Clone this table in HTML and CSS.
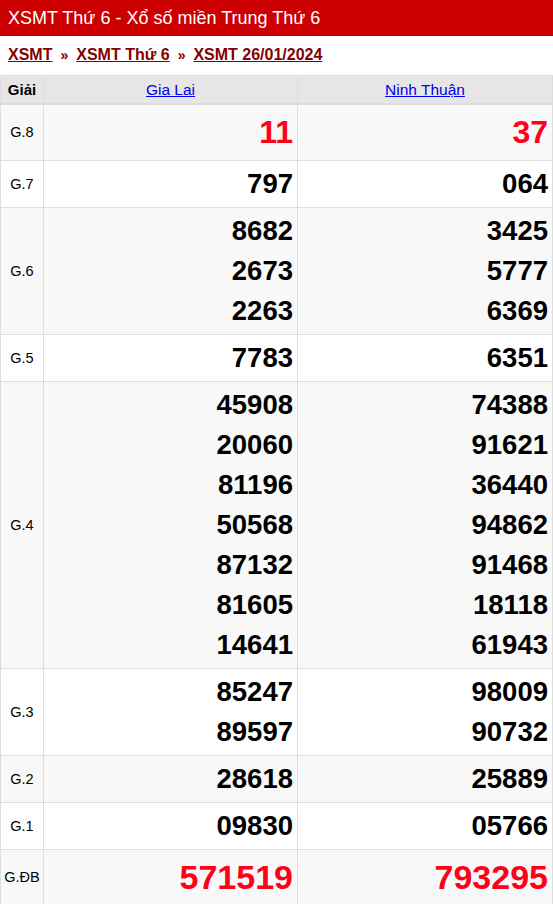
FILE: index.html
```html
<!DOCTYPE html>
<html lang="vi">
<head>
<meta charset="utf-8">
<link rel="stylesheet" href="styles.css">
</head>
<body>
<h1 class="title">XSMT Thứ 6 - Xổ số miền Trung Thứ 6</h1>
<div class="crumbs"><a href="#">XSMT</a><span class="sep">»</span><a href="#">XSMT Thứ 6</a><span class="sep">»</span><a href="#">XSMT 26/01/2024</a></div>
<table class="kq">
<colgroup><col class="c1"><col class="c2"><col class="c3"></colgroup>
<thead>
<tr><th class="g">Giải</th><th><a href="#">Gia Lai</a></th><th><a href="#">Ninh Thuận</a></th></tr>
</thead>
<tbody>
<tr class="alt big"><td class="g">G.8</td><td class="red">11</td><td class="red">37</td></tr>
<tr><td class="g">G.7</td><td>797</td><td>064</td></tr>
<tr class="alt"><td class="g">G.6</td><td>8682<br>2673<br>2263</td><td>3425<br>5777<br>6369</td></tr>
<tr><td class="g">G.5</td><td>7783</td><td>6351</td></tr>
<tr class="alt"><td class="g">G.4</td><td>45908<br>20060<br>81196<br>50568<br>87132<br>81605<br>14641</td><td>74388<br>91621<br>36440<br>94862<br>91468<br>18118<br>61943</td></tr>
<tr><td class="g">G.3</td><td>85247<br>89597</td><td>98009<br>90732</td></tr>
<tr class="alt"><td class="g">G.2</td><td>28618</td><td>25889</td></tr>
<tr><td class="g">G.1</td><td>09830</td><td>05766</td></tr>
<tr class="alt db"><td class="g">G.ĐB</td><td class="red">571519</td><td class="red">793295</td></tr>
</tbody>
</table>
</body>
</html>
```
FILE: styles.css
```css
html, body {
  margin: 0;
  padding: 0;
  background: #fff;
  font-family: "Liberation Sans", Arial, sans-serif;
  color: #000;
}
.title {
  margin: 0;
  height: 36px;
  line-height: 36px;
  background: #cc0000;
  color: #fff;
  font-size: 18px;
  font-weight: normal;
  padding: 0 8px;
}
.crumbs {
  height: 39px;
  line-height: 38px;
  padding: 0 8px;
  font-size: 16px;
  font-weight: bold;
}
.crumbs a {
  color: #850000;
  text-decoration: underline;
}
.crumbs .sep {
  color: #850000;
  margin: 0 8px;
  font-size: 14px;
}
.kq {
  width: 553px;
  border-collapse: collapse;
  table-layout: fixed;
}
.kq col.c1 { width: 43px; }
.kq col.c2 { width: 254px; }
.kq th, .kq td {
  border: 1px solid #dddddd;
}
.kq thead th {
  background: #e6e6e6;
  height: 27px;
  padding: 0;
  font-size: 15.5px;
  font-weight: normal;
  border-bottom: 2px solid #dddddd;
}
.kq thead th.g {
  font-weight: bold;
  font-size: 15px;
}
.kq thead th a {
  color: #0000ee;
}
.kq td {
  text-align: right;
  font-size: 27.5px;
  font-weight: bold;
  line-height: 40px;
  padding: 3px 4px 3px 4px;
  vertical-align: middle;
}
.kq td.g {
  text-align: center;
  font-size: 14.5px;
  font-weight: normal;
  padding: 0;
}
.kq tr.alt td {
  background: #f8f8f8;
}
.kq tr.big td {
  font-size: 32px;
  line-height: 49px;
}
.kq tr.db td {
  font-size: 34px;
  line-height: 49px;
}
.kq tr.big td.g, .kq tr.db td.g {
  font-size: 14.5px;
}
.kq td.red {
  color: #ff0018;
}
```
